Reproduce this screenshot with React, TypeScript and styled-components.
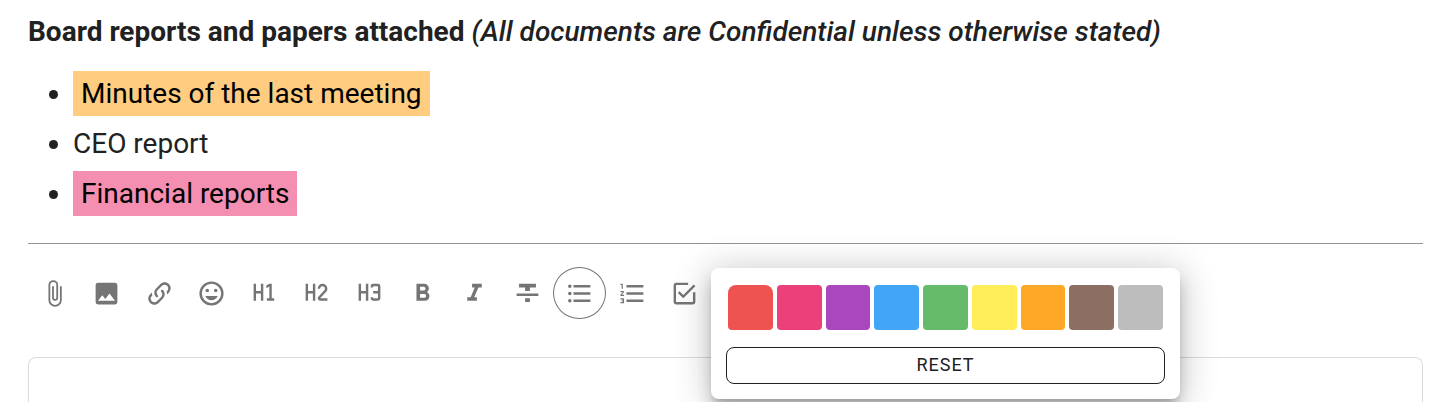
import React from "react";
import styled, { createGlobalStyle } from "styled-components";

const GlobalStyle = createGlobalStyle`
  *, *::before, *::after { box-sizing: border-box; }
  html, body, #root { height: 100%; }
  body {
    margin: 0;
    background: #fff;
    color: #212121;
    font-family: Roboto, "Liberation Sans", sans-serif;
    overflow: hidden;
  }
`;

const Page = styled.main`
  display: flex;
  flex-direction: column;
  min-height: 100%;
  padding: 12px 23px 0 28px;
`;

const Title = styled.h1`
  margin: 0;
  font-size: 28px;
  line-height: 40px;
  font-weight: 700;

  em { font-weight: 500; }
`;

const PaperList = styled.ul`
  margin: 17px 0 0;
  padding: 0 0 0 45px;
  font-size: 28px;
  line-height: 50px;
`;

const Highlight = styled.mark<{ $tint: string }>`
  padding: 6px 8px;
  color: #000;
  background: ${(p) => p.$tint};
`;

const Divider = styled.hr`
  width: 100%;
  height: 1px;
  margin: 24px 0 0;
  border: 0;
  background: #949494;
`;

const ToolbarRow = styled.div`
  display: flex;
  margin-top: 23px;
`;

const Toolbar = styled.div`
  position: relative;
  display: grid;
  grid-template-columns: repeat(13, 1fr);
  flex: 0 1 683px;
`;

const ToolButton = styled.button<{ $active?: boolean }>`
  display: flex;
  align-items: center;
  justify-content: center;
  height: 52px;
  padding: 0;
  border: 1px solid ${(p) => (p.$active ? "#757575" : "transparent")};
  border-radius: 50%;
  background: none;
  color: #757575;
  cursor: pointer;
`;

const Glyph = styled.svg`
  width: 29px;
  height: 29px;
  flex: none;
  fill: currentColor;
`;

const Picker = styled.div`
  position: absolute;
  top: 1px;
  left: 100%;
  z-index: 2;
  display: flex;
  flex-direction: column;
  gap: 17px;
  width: 469px;
  padding: 17px 15px 15px;
  border-radius: 8px;
  background: #fff;
  box-shadow:
    0 7px 7px -4px rgba(0, 0, 0, 0.2),
    0 11px 14px 1px rgba(0, 0, 0, 0.14),
    0 4px 36px 4px rgba(0, 0, 0, 0.2);
`;

const Swatches = styled.div`
  display: grid;
  grid-template-columns: repeat(9, 1fr);
  gap: 4px;
  padding: 0 2px;
`;

const Swatch = styled.button<{ $color: string }>`
  height: 45px;
  padding: 0;
  border: 0;
  border-radius: 4px;
  background: ${(p) => p.$color};
  cursor: pointer;

  &:first-child { border-radius: 8px 8px 4px 4px; }
`;

const ResetButton = styled.button`
  height: 37px;
  padding: 0 0 2px;
  border: 1px solid #212121;
  border-radius: 8px;
  background: #fff;
  color: #212121;
  font: 400 18px/20px Roboto, "Liberation Sans", sans-serif;
  letter-spacing: 1px;
  text-transform: uppercase;
  cursor: pointer;
`;

const Editor = styled.textarea`
  display: block;
  flex: 1;
  width: 100%;
  margin-top: 38px;
  padding: 2px 16px;
  border: 1px solid #dcdcdc;
  border-bottom: 0;
  border-radius: 8px 8px 0 0;
  background: #fff;
  font: 400 28px/40px Roboto, "Liberation Sans", sans-serif;
  resize: none;
  outline: 0;
`;

const H = "M3,4H5V10H9V4H11V18H9V12H5V18H3V4";

const tools: { label: string; path: string; active?: boolean }[] = [
  {
    label: "Attach file",
    path: "M16.5,6V17.5A4,4 0 0,1 12.5,21.5A4,4 0 0,1 8.5,17.5V5A2.5,2.5 0 0,1 11,2.5A2.5,2.5 0 0,1 13.5,5V15.5A1,1 0 0,1 12.5,16.5A1,1 0 0,1 11.5,15.5V6H10V15.5A2.5,2.5 0 0,0 12.5,18A2.5,2.5 0 0,0 15,15.5V5A4,4 0 0,0 11,1A4,4 0 0,0 7,5V17.5A5.5,5.5 0 0,0 12.5,23A5.5,5.5 0 0,0 18,17.5V6H16.5Z",
  },
  {
    label: "Insert image",
    path: "M8.5,13.5L11,16.5L14.5,12L19,18H5M21,19V5C21,3.89 20.1,3 19,3H5A2,2 0 0,0 3,5V19A2,2 0 0,0 5,21H19A2,2 0 0,0 21,19Z",
  },
  {
    label: "Insert link",
    path: "M10.59,13.41C11,13.8 11,14.44 10.59,14.83C10.2,15.22 9.56,15.22 9.17,14.83C7.22,12.88 7.22,9.71 9.17,7.76V7.76L12.71,4.22C14.66,2.27 17.83,2.27 19.78,4.22C21.73,6.17 21.73,9.34 19.78,11.29L18.29,12.78C18.3,11.96 18.17,11.14 17.89,10.36L18.36,9.88C19.54,8.71 19.54,6.81 18.36,5.64C17.19,4.46 15.29,4.46 14.12,5.64L10.59,9.17C9.41,10.34 9.41,12.24 10.59,13.41M13.41,9.17C13.8,8.78 14.44,8.78 14.83,9.17C16.78,11.12 16.78,14.29 14.83,16.24V16.24L11.29,19.78C9.34,21.73 6.17,21.73 4.22,19.78C2.27,17.83 2.27,14.66 4.22,12.71L5.71,11.22C5.7,12.04 5.83,12.86 6.11,13.65L5.64,14.12C4.46,15.29 4.46,17.19 5.64,18.36C6.81,19.54 8.71,19.54 9.88,18.36L13.41,14.83C14.59,13.66 14.59,11.76 13.41,10.59C13,10.2 13,9.56 13.41,9.17Z",
  },
  {
    label: "Insert emoji",
    path: "M12,17.5C14.33,17.5 16.3,16.04 17.11,14H6.89C7.69,16.04 9.67,17.5 12,17.5M8.5,11A1.5,1.5 0 0,0 10,9.5A1.5,1.5 0 0,0 8.5,8A1.5,1.5 0 0,0 7,9.5A1.5,1.5 0 0,0 8.5,11M15.5,11A1.5,1.5 0 0,0 17,9.5A1.5,1.5 0 0,0 15.5,8A1.5,1.5 0 0,0 14,9.5A1.5,1.5 0 0,0 15.5,11M12,20A8,8 0 0,1 4,12A8,8 0 0,1 12,4A8,8 0 0,1 20,12A8,8 0 0,1 12,20M12,2C6.47,2 2,6.5 2,12A10,10 0 0,0 12,22A10,10 0 0,0 22,12A10,10 0 0,0 12,2Z",
  },
  { label: "Heading 1", path: `${H}M14,18V16H16V6.31L13.5,7.75V5.44L16,4H18V16H20V18H14Z` },
  {
    label: "Heading 2",
    path: `${H}M21,18H15A2,2 0 0,1 13,16C13,15.47 13.2,15 13.54,14.64L18.41,9.41C18.78,9.05 19,8.55 19,8A2,2 0 0,0 17,6A2,2 0 0,0 15,8H13A4,4 0 0,1 17,4A4,4 0 0,1 21,8C21,9.1 20.55,10.1 19.83,10.83L15,16H21V18Z`,
  },
  {
    label: "Heading 3",
    path: `${H}M15,4H19A2,2 0 0,1 21,6V16A2,2 0 0,1 19,18H15A2,2 0 0,1 13,16V15H15V16H19V12H15V10H19V6H15V7H13V6A2,2 0 0,1 15,4Z`,
  },
  {
    label: "Bold",
    path: "M13.5,15.5H10V12.5H13.5A1.5,1.5 0 0,1 15,14A1.5,1.5 0 0,1 13.5,15.5M10,6.5H13A1.5,1.5 0 0,1 14.5,8A1.5,1.5 0 0,1 13,9.5H10M15.6,10.79C16.57,10.11 17.25,9 17.25,8C17.25,5.74 15.5,4 13.25,4H7V18H14.04C16.14,18 17.75,16.3 17.75,14.21C17.75,12.69 16.89,11.39 15.6,10.79Z",
  },
  { label: "Italic", path: "M10,4V7H12.21L8.79,15H6V18H14V15H11.79L15.21,7H18V4H10Z" },
  { label: "Strikethrough", path: "M3,14H21V12H3M5,4V7H10V10H14V7H19V4M10,19H14V16H10V19Z" },
  {
    label: "Bulleted list",
    active: true,
    path: "M7,5H21V7H7V5M7,13V11H21V13H7M4,4.5A1.5,1.5 0 0,1 5.5,6A1.5,1.5 0 0,1 4,7.5A1.5,1.5 0 0,1 2.5,6A1.5,1.5 0 0,1 4,4.5M4,10.5A1.5,1.5 0 0,1 5.5,12A1.5,1.5 0 0,1 4,13.5A1.5,1.5 0 0,1 2.5,12A1.5,1.5 0 0,1 4,10.5M7,19V17H21V19H7M4,16.5A1.5,1.5 0 0,1 5.5,18A1.5,1.5 0 0,1 4,19.5A1.5,1.5 0 0,1 2.5,18A1.5,1.5 0 0,1 4,16.5Z",
  },
  {
    label: "Numbered list",
    path: "M7,13V11H21V13H7M7,19V17H21V19H7M7,7V5H21V7H7M3,8V5H2V4H4V8H3M2,17V16H5V20H2V19H4V18.5H3V17.5H4V17H2M4.25,10A0.75,0.75 0 0,1 5,10.75C5,10.95 4.92,11.14 4.79,11.27L3.12,13H5V14H2V13.08L4,11H2V10H4.25Z",
  },
  {
    label: "Task list",
    path: "M19,19H5V5H15V3H5C3.89,3 3,3.89 3,5V19A2,2 0 0,0 5,21H19A2,2 0 0,0 21,19V11H19M7.91,10.08L6.5,11.5L11,16L21,6L19.59,4.58L11,13.17L7.91,10.08Z",
  },
];

const colors = [
  ["Red", "#ef5350"],
  ["Pink", "#ec407a"],
  ["Purple", "#ab47bc"],
  ["Blue", "#42a5f5"],
  ["Green", "#66bb6a"],
  ["Yellow", "#ffee58"],
  ["Orange", "#ffa726"],
  ["Brown", "#8d6e63"],
  ["Grey", "#bdbdbd"],
];

export default function App() {
  return (
    <>
      <GlobalStyle />
      <Page>
        <Title>
          Board reports and papers attached{" "}
          <em>(All documents are Confidential unless otherwise stated)</em>
        </Title>
        <PaperList>
          <li><Highlight $tint="#ffcc80">Minutes of the last meeting</Highlight></li>
          <li>CEO report</li>
          <li><Highlight $tint="#f48fb1">Financial reports</Highlight></li>
        </PaperList>
        <Divider />
        <ToolbarRow>
          <Toolbar role="toolbar" aria-label="Formatting">
            {tools.map((tool) => (
              <ToolButton
                key={tool.label}
                type="button"
                aria-label={tool.label}
                aria-pressed={!!tool.active}
                $active={tool.active}
              >
                <Glyph viewBox="0 0 24 24" aria-hidden="true">
                  <path d={tool.path} />
                </Glyph>
              </ToolButton>
            ))}
            <Picker role="group" aria-label="Highlight colour">
              <Swatches>
                {colors.map(([name, value]) => (
                  <Swatch key={name} type="button" aria-label={name} $color={value} />
                ))}
              </Swatches>
              <ResetButton type="button">Reset</ResetButton>
            </Picker>
          </Toolbar>
        </ToolbarRow>
        <Editor rows={1} aria-label="Comment" />
      </Page>
    </>
  );
}
